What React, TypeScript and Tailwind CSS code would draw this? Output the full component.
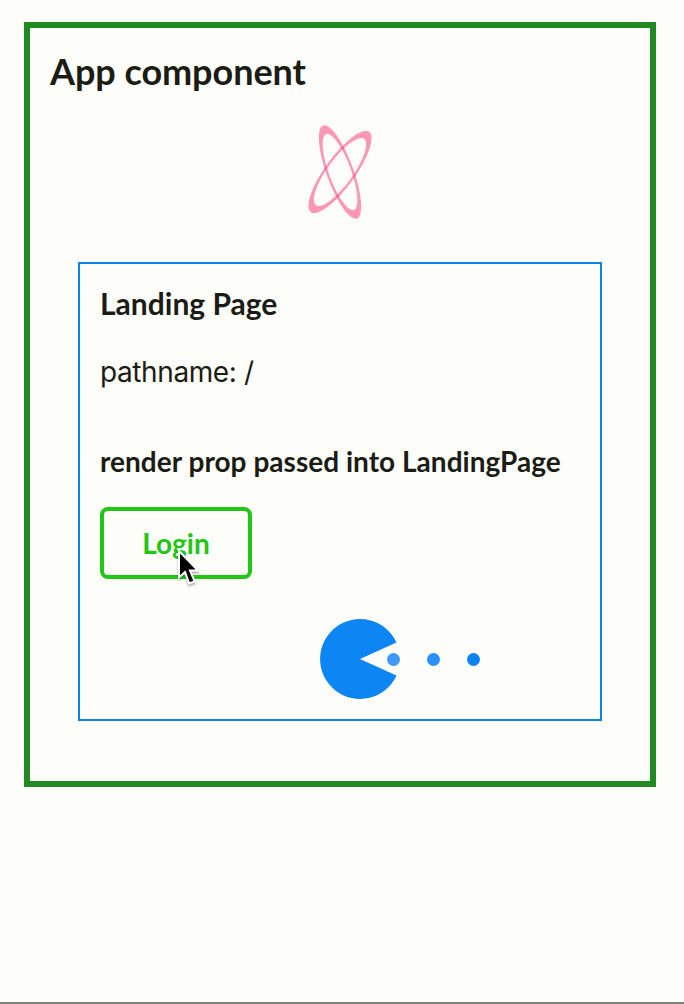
function OrbitLoader() {
  return (
    <svg width="96" height="96" viewBox="-48 -48 96 96" className="block overflow-visible" aria-hidden="true">
      <g fill="#ff2f6f" fillOpacity="0.5" fillRule="evenodd">
        <path
          transform="rotate(-20)"
          d="M-13.5 0A13.5 49.6 0 1 1 13.5 0A13.5 49.6 0 1 1 -13.5 0ZM-11.1 0A11.1 40.5 0 1 0 11.1 0A11.1 40.5 0 1 0 -11.1 0Z"
        />
        <path
          transform="rotate(36)"
          d="M-15 0A15 49.6 0 1 1 15 0A15 49.6 0 1 1 -15 0ZM-12.6 0A12.6 41 0 1 0 12.6 0A12.6 41 0 1 0 -12.6 0Z"
        />
      </g>
    </svg>
  );
}

function PacmanLoader() {
  return (
    <svg width="161" height="80" viewBox="0 0 161 80" className="block" fill="#0d86f4" aria-hidden="true">
      <path d="M40 40L76.5 23.5A40 40 0 1 0 76.5 56.5Z" />
      <circle cx="73.5" cy="40.5" r="6.5" fill="#3d99f8" />
      <circle cx="113.5" cy="40.5" r="6.5" fill="#2990f8" />
      <circle cx="153.5" cy="40.5" r="6.5" fill="#0f82f2" />
    </svg>
  );
}

function Cursor() {
  return (
    <svg
      width="26"
      height="40"
      viewBox="0 0 26 40"
      className="pointer-events-none absolute top-[42px] left-[77px] drop-shadow-[0_2px_1px_rgba(0,0,0,0.3)]"
      aria-hidden="true"
    >
      <path
        d="M2 2V28.5L8 23L12.2 34.5L17.6 32.3L13 21.5H21Z"
        fill="#000"
        stroke="#fff"
        strokeWidth="2"
      />
    </svg>
  );
}

function LandingPage() {
  return (
    <section className="mx-12 mt-[43px] flex h-[459px] flex-col border-2 border-[#0c83ee] px-5 text-[#1b1c15]">
      <h2 className="mt-[21px] text-[30px] leading-9 font-bold">Landing Page</h2>
      <p className="mt-[33px] font-['Inter',sans-serif] text-[28px] leading-9 tracking-[-0.4px]">
        pathname: /
      </p>
      <h3 className="mt-[53px] text-[28px] leading-9 font-bold tracking-[0.03px] whitespace-nowrap">
        render prop passed into LandingPage
      </h3>
      <div className="relative mt-7 w-[152px]">
        <button
          type="button"
          className="block h-[72px] w-full rounded-lg border-4 border-[#21c712] text-[28px] leading-9 font-bold text-[#21c712]"
        >
          Login
        </button>
        <Cursor />
      </div>
      <div className="mt-10 ml-[220px]">
        <PacmanLoader />
      </div>
    </section>
  );
}

export default function App() {
  return (
    <div className="flex h-[1004px] flex-col overflow-hidden border-b-2 border-[#80807a] bg-[#fdfdfa] px-6 pt-[22px] font-['Lato',sans-serif] text-[#1b1c15]">
      <main className="mr-1 h-[765px] border-6 border-[#218a22]">
        <h1 className="mt-[21px] ml-5 text-[36px] leading-[44px] font-bold tracking-[-0.05px]">
          App component
        </h1>
        <div className="mt-[30px] flex justify-center">
          <div className="relative top-px">
            <OrbitLoader />
          </div>
        </div>
        <LandingPage />
      </main>
    </div>
  );
}
